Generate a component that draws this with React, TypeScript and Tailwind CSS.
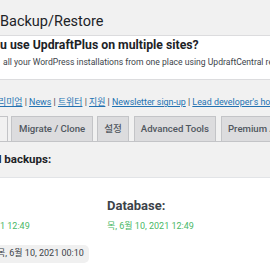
export default function App() {
  const font = { fontFamily: 'Roboto, "Noto Sans CJK KR", sans-serif' };
  return (
    <div className="w-[270px] h-[270px] overflow-hidden bg-[#f1f1f1] text-[#1d2327]" style={font}>
      {/* title */}
      <div className="h-[35px] pt-[13px] whitespace-nowrap">
        <h1 className="text-[14.5px] leading-[18px] font-normal">Backup/Restore</h1>
      </div>
      {/* notice */}
      <div className="h-[45px] bg-white border-y border-[#dcdcde] whitespace-nowrap overflow-hidden">
        <div className="text-[12.25px] leading-[16px] font-bold mt-[1px]">u use UpdraftPlus on multiple sites?</div>
        <div className="text-[8.6px] leading-[12px] mt-[3px] ml-[3px] text-[#3c434a]">
          all your WordPress installations from one place using UpdraftCentral remote control
        </div>
      </div>
      {/* links */}
      <div className="h-[36px] pt-[15px] whitespace-nowrap overflow-hidden text-[8.9px] leading-[14px] text-[#3c434a]">
        <span className="ml-[-2px]">
          <a className="text-[#2271b1] underline">리미엄</a> | <a className="text-[#2271b1] underline">News</a> |{' '}
          <a className="text-[#2271b1] underline">트위터</a> | <a className="text-[#2271b1] underline">지원</a> |{' '}
          <a className="text-[#2271b1] underline">Newsletter sign-up</a> |{' '}
          <a className="text-[#2271b1] underline">Lead developer's homepage</a>
        </span>
      </div>
      {/* tabs */}
      <div className="flex items-end h-[26px] border-b border-[#c3c4c7] whitespace-nowrap overflow-hidden text-[9.6px] text-[#50575e] font-medium">
        <div className="shrink-0 w-[8px] h-[26px] border-r border-t border-[#c3c4c7] bg-[#f1f1f1] -mb-px"></div>
        <div className="shrink-0 ml-[3px] h-[25px] px-[7px] flex items-center bg-[#dcdcde] border border-b-0 border-[#c3c4c7]">Migrate / Clone</div>
        <div className="shrink-0 ml-[4px] h-[25px] px-[6px] flex items-center bg-[#dcdcde] border border-b-0 border-[#c3c4c7]">설정</div>
        <div className="shrink-0 ml-[5px] h-[25px] px-[6px] flex items-center bg-[#dcdcde] border border-b-0 border-[#c3c4c7]">Advanced Tools</div>
        <div className="shrink-0 ml-[5px] h-[25px] px-[6px] flex items-center bg-[#dcdcde] border border-b-0 border-[#c3c4c7]">Premium / Extensions</div>
      </div>
      {/* backups heading */}
      <div className="h-[36px] pt-[9px] whitespace-nowrap overflow-hidden border-b border-[#e2e4e7]">
        <div className="text-[11.5px] leading-[16px] font-bold ml-[-5px]">d backups:</div>
      </div>
      {/* white area */}
      <div className="bg-white h-[100px] whitespace-nowrap overflow-hidden">
        <div className="flex pt-[19px]">
          <div className="w-[107px]">
            <div className="text-[13px] leading-[18px] font-bold text-[#3c434a] invisible">Files:</div>
            <div className="text-[9px] leading-[14px] text-[#4ab866] mt-[4px]">1 12:49</div>
          </div>
          <div>
            <div className="text-[13px] leading-[18px] font-bold text-[#3c434a]">Database:</div>
            <div className="text-[9px] leading-[14px] text-[#4ab866] mt-[4px]">목, 6월 10, 2021 12:49</div>
          </div>
        </div>
        <div className="mt-[12px] w-[89px] h-[18px] rounded-r-[5px] bg-[#f0f0f0] flex items-center text-[9px] text-[#3c434a] overflow-hidden">
          <span className="ml-[-3px]">목, 6월 10, 2021 00:10</span>
        </div>
      </div>
    </div>
  );
}
